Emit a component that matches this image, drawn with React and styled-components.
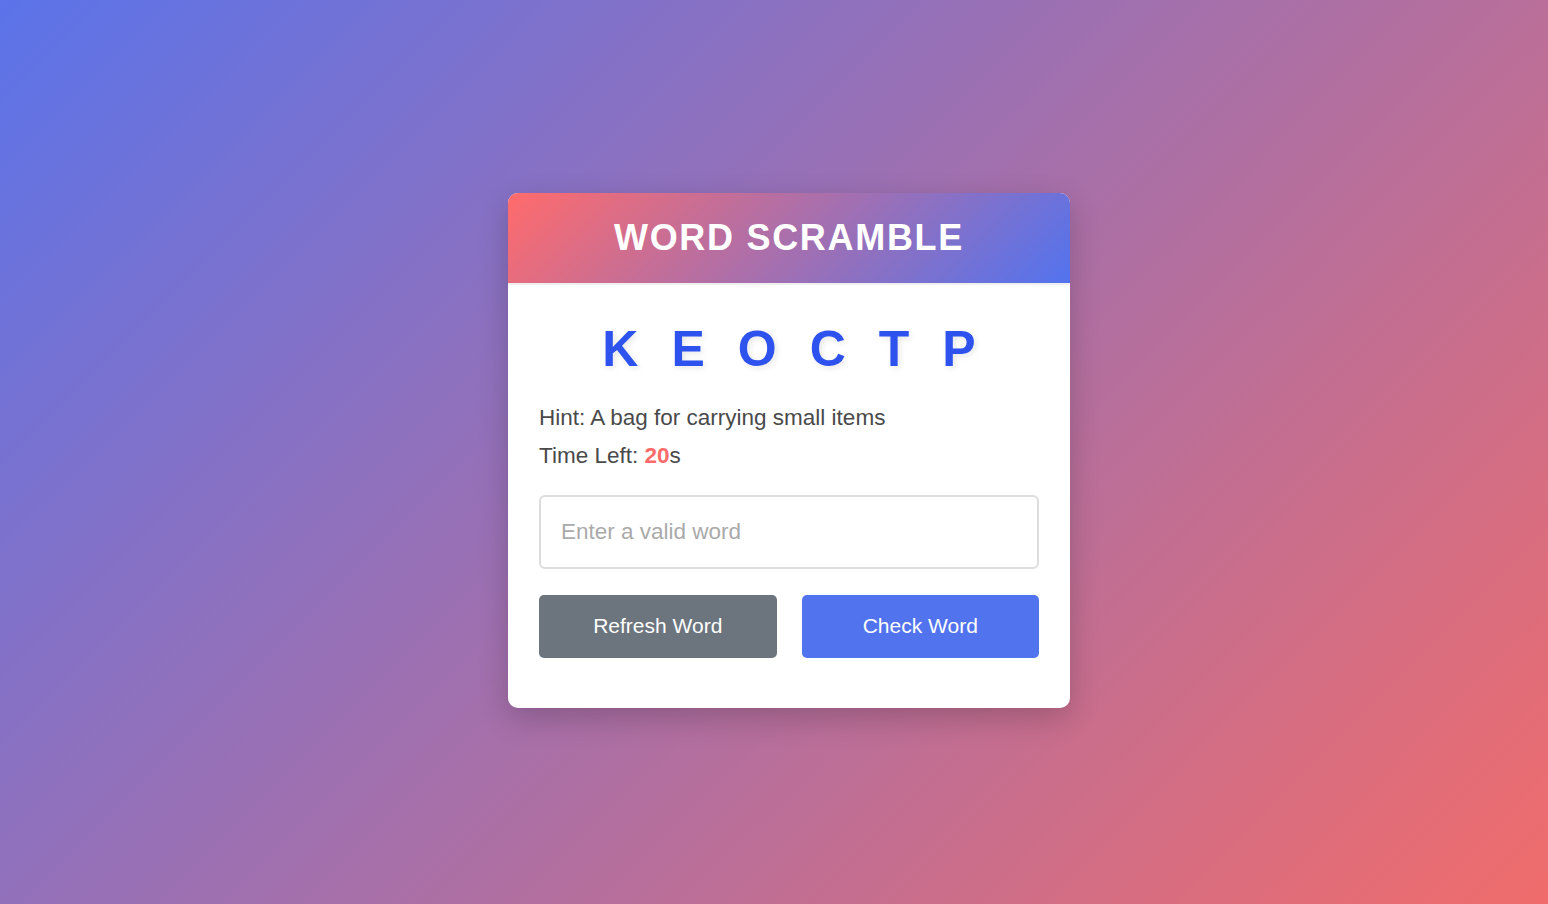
import React, { useState } from 'react';
import styled, { createGlobalStyle } from 'styled-components';

const GlobalStyle = createGlobalStyle`
  * {
    box-sizing: border-box;
  }
  body {
    margin: 0;
    font-family: "Liberation Sans", Arial, sans-serif;
  }
`;

const Page = styled.div`
  min-height: 904px;
  display: flex;
  align-items: center;
  justify-content: center;
  padding: 0 0 4px 30px;
  background: linear-gradient(135deg, #5b73e9, #f06c6b);
`;

const Card = styled.div`
  width: 562px;
  background: #fff;
  border-radius: 10px;
  overflow: hidden;
  box-shadow: 0 10px 30px rgba(0, 0, 0, 0.2);
`;

const Header = styled.header`
  height: 92px;
  display: flex;
  align-items: center;
  justify-content: center;
  background: linear-gradient(135deg, #ff6b6b, #5273ee);
  border-bottom: 2px solid #efefef;
`;

const Title = styled.h1`
  margin: 0;
  color: #fff;
  font-size: 36px;
  font-weight: bold;
  letter-spacing: 1.7px;
`;

const Body = styled.div`
  padding: 36px 31px 50px;
`;

const Letters = styled.div`
  display: flex;
  justify-content: center;
  gap: 33px;
  margin-bottom: 21px;
`;

const Letter = styled.span`
  font-size: 50px;
  font-weight: bold;
  line-height: 57px;
  color: #2d52ee;
  text-shadow: 2px 2px 6px rgba(0, 0, 0, 0.1);
`;

const Info = styled.p`
  margin: 0;
  font-size: 22.5px;
  line-height: 38px;
  color: #4a4a4a;
`;

const Timer = styled.b`
  color: #ff6b6b;
`;

const WordInput = styled.input`
  display: block;
  width: 100%;
  height: 74px;
  margin-top: 20px;
  padding: 0 20px;
  border: 2px solid #ddd;
  border-radius: 6px;
  font-family: inherit;
  font-size: 22.5px;
  color: #333;
  outline: none;

  &::placeholder {
    color: #aaa;
  }
`;

const Buttons = styled.div`
  display: grid;
  grid-template-columns: 1fr 1fr;
  gap: 25px;
  margin-top: 26px;
`;

const Button = styled.button`
  height: 63px;
  border: none;
  border-radius: 5px;
  background: ${(p) => (p.$primary ? '#5273ee' : '#6c757d')};
  color: #fff;
  font-family: inherit;
  font-size: 21px;
  cursor: pointer;
`;

export default function App() {
  const [word, setWord] = useState('');
  const letters = ['K', 'E', 'O', 'C', 'T', 'P'];

  return (
    <>
      <GlobalStyle />
      <Page>
        <Card>
          <Header>
            <Title>WORD SCRAMBLE</Title>
          </Header>
          <Body>
            <Letters>
              {letters.map((l, i) => (
                <Letter key={i}>{l}</Letter>
              ))}
            </Letters>
            <Info>Hint: A bag for carrying small items</Info>
            <Info>
              Time Left: <Timer>20</Timer>s
            </Info>
            <WordInput
              type="text"
              placeholder="Enter a valid word"
              value={word}
              onChange={(e) => setWord(e.target.value)}
            />
            <Buttons>
              <Button>Refresh Word</Button>
              <Button $primary>Check Word</Button>
            </Buttons>
          </Body>
        </Card>
      </Page>
    </>
  );
}
